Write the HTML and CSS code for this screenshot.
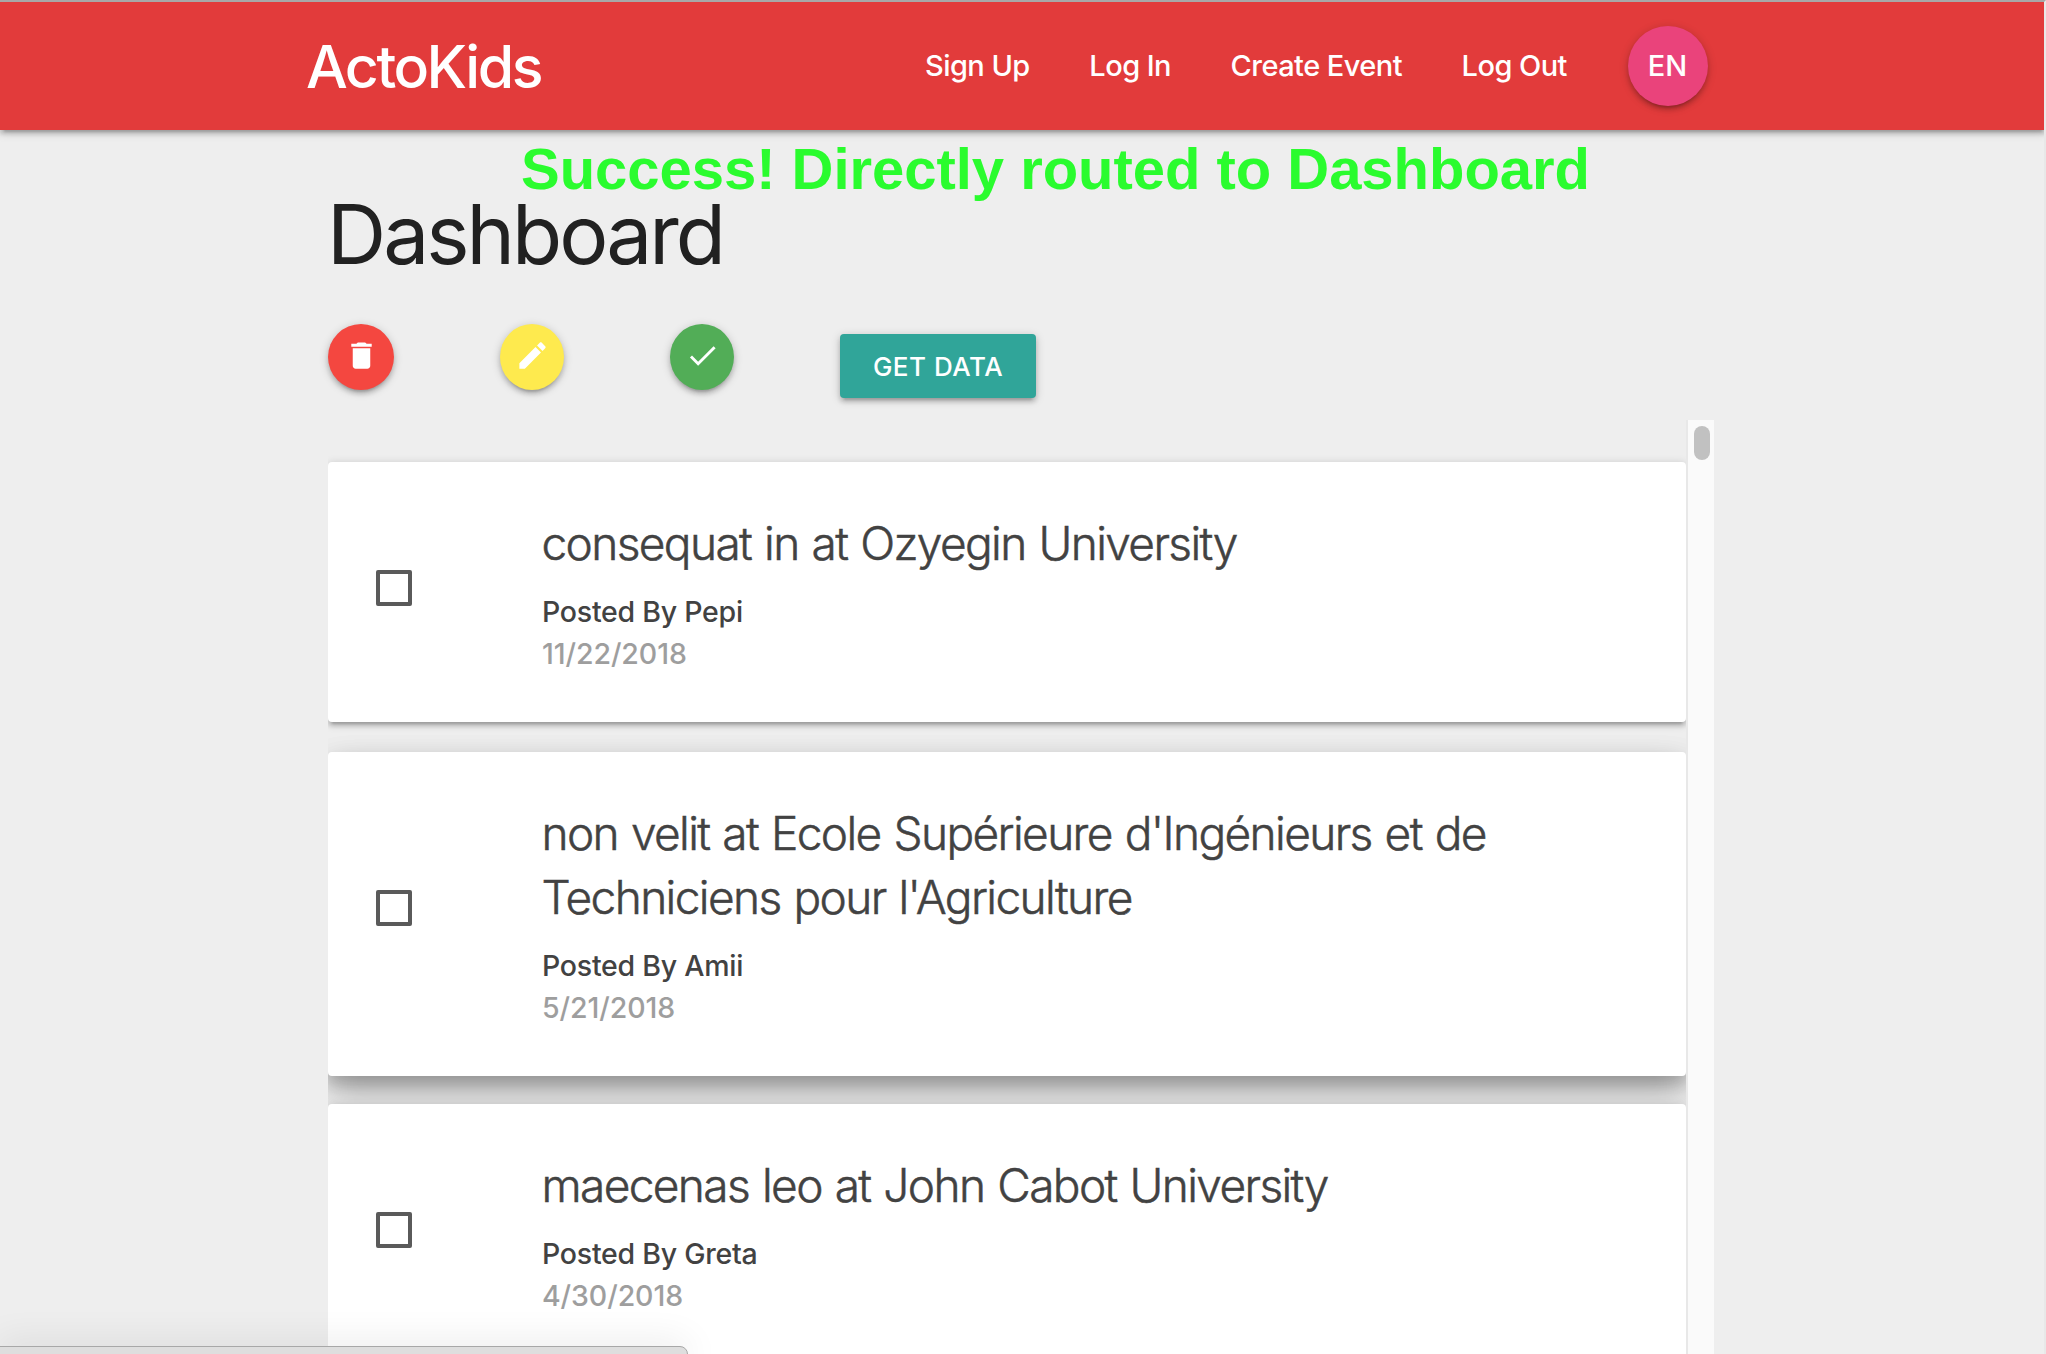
FILE: index.html
```
<!DOCTYPE html>
<html lang="en">
<head>
<meta charset="utf-8">
<title>ActoKids</title>
<link rel="stylesheet" href="styles.css">
</head>
<body>
<div class="page">
  <header class="navbar">
    <a class="brand">ActoKids</a>
    <nav class="links">
      <a class="link">Sign Up</a>
      <a class="link">Log In</a>
      <a class="link">Create Event</a>
      <a class="link">Log Out</a>
      <a class="lang">EN</a>
    </nav>
  </header>
  <p class="flash">Success! Directly routed to Dashboard</p>
  <main class="main">
    <h1 class="heading">Dashboard</h1>
    <div class="actions">
      <button class="round round-delete" aria-label="Delete"><svg class="icon" viewBox="0 0 24 24"><path d="M6 19c0 1.1.9 2 2 2h8c1.1 0 2-.9 2-2V7H6v12zM19 4h-3.500l-1-1h-5l-1 1H5v2h14V4z"/></svg></button>
      <button class="round" aria-label="Edit"><svg class="icon" viewBox="0 0 24 24"><path d="M3 17.250V21h3.750L17.810 9.940l-3.750-3.750L3 17.250zM20.710 7.040c.39-.39.39-1.020 0-1.410l-2.340-2.340c-.39-.39-1.020-.39-1.410 0l-1.830 1.830 3.750 3.750 1.830-1.830z"/></svg></button>
      <button class="round round-approve" aria-label="Approve"><svg class="icon" viewBox="0 0 24 24"><path d="M9 16.200L4.800 12l-1.400 1.400L9 19 21 7l-1.400-1.400L9 16.200z"/></svg></button>
      <button class="get-data">GET DATA</button>
    </div>
    <div class="scroller">
      <div class="list">
        <article class="card">
          <span class="check"></span>
          <div class="info"><h2 class="title">consequat in at Ozyegin University</h2><p class="author">Posted By Pepi</p><p class="date">11/22/2018</p></div>
        </article>
        <article class="card card-hover">
          <span class="check"></span>
          <div class="info"><h2 class="title">non velit at Ecole Supérieure d'Ingénieurs et de Techniciens pour l'Agriculture</h2><p class="author">Posted By Amii</p><p class="date">5/21/2018</p></div>
        </article>
        <article class="card">
          <span class="check"></span>
          <div class="info"><h2 class="title">maecenas leo at John Cabot University</h2><p class="author">Posted By Greta</p><p class="date">4/30/2018</p></div>
        </article>
      </div>
      <div class="track"><div class="thumb"></div></div>
    </div>
  </main>
  <div class="status"></div>
</div>
</body>
</html>
```
FILE: styles.css
```
* { box-sizing: border-box; margin: 0; }
body { background: #eee; font-family: Inter, "Liberation Sans", sans-serif; }
.page {
  position: relative;
  height: 1354px;
  overflow: hidden;
  border-top: 2px solid #a8a8a8;
  border-right: 2px solid #e8e8e8;
  display: flex;
  flex-direction: column;
}
.navbar {
  flex: none;
  height: 128px;
  margin-right: -2px;
  padding: 0 338px 0 306px;
  display: flex;
  align-items: center;
  justify-content: space-between;
  background: #e23b3b;
  color: #fff;
  box-shadow: 0 4px 4px rgba(0,0,0,.14), 0 6px 2px -4px rgba(0,0,0,.12), 0 2px 10px rgba(0,0,0,.2);
}
.brand { padding-top: 2px; font-size: 59px; font-weight: 500; line-height: 126px; letter-spacing: -2.5px; }
.links { display: flex; align-items: center; gap: 59.6px; font-size: 29px; font-weight: 500; line-height: 128px; letter-spacing: -.55px; }
.lang {
  width: 80px;
  height: 80px;
  margin-left: 1.5px;
  padding-right: 1px;
  line-height: 80px;
  border-radius: 50%;
  text-align: center;
  letter-spacing: 0;
  background: #ea437b;
  box-shadow: 0 4px 4px rgba(0,0,0,.14), 0 6px 2px -4px rgba(0,0,0,.12), 0 2px 10px rgba(0,0,0,.2);
}
.flash {
  position: absolute;
  left: 521px;
  top: 134px;
  font: bold 58px/66px "Liberation Sans", Arial, sans-serif;
  letter-spacing: -.03px;
  white-space: nowrap;
  color: #2afc2e;
}
.main { flex: 1; min-height: 0; padding: 59px 330px 0 328px; display: flex; flex-direction: column; }
.heading { margin-left: -1px; font-size: 82px; font-weight: 400; line-height: 92px; letter-spacing: -3px; color: #212121; }
.actions { margin-top: 43px; height: 96px; display: grid; grid-template-columns: 172px 170px 170px 196px; align-items: start; }
.round {
  width: 64px;
  height: 66px;
  padding: 0 0 4px;
  border: 0;
  border-radius: 50%;
  display: flex;
  align-items: center;
  justify-content: center;
  background: #feea4e;
  box-shadow: 0 4px 4px rgba(0,0,0,.14), 0 6px 2px -4px rgba(0,0,0,.12), 0 2px 10px rgba(0,0,0,.2);
}
.round-delete { width: 66px; background: #f44740; }
.round-approve { background: #52ad57; }
.icon { width: 35px; height: 35px; fill: #fff; }
.get-data {
  height: 64px;
  margin-top: 10px;
  padding: 2px 0 0;
  border: 0;
  border-radius: 4px;
  background: #30a599;
  color: #fff;
  font: 500 26px/62px Inter, sans-serif;
  letter-spacing: .5px;
  box-shadow: 0 4px 4px rgba(0,0,0,.14), 0 6px 2px -4px rgba(0,0,0,.12), 0 2px 10px rgba(0,0,0,.2);
}
.scroller { flex: 1; min-height: 0; display: flex; }
.list { width: 1358px; padding-top: 42px; overflow: hidden; }
.card {
  display: flex;
  align-items: center;
  padding: 49px 48px 47px;
  margin-bottom: 28px;
  border-radius: 4px;
  background: #fff;
  box-shadow: 0 4px 4px rgba(0,0,0,.14), 0 6px 2px -4px rgba(0,0,0,.12), 0 2px 10px rgba(0,0,0,.2);
}
.card:first-child { margin-bottom: 30px; }
.card-hover { box-shadow: 0 16px 34px rgba(0,0,0,.2), 0 12px 30px rgba(0,0,0,.17), 0 8px 12px rgba(0,0,0,.1); }
.check { flex: none; width: 36px; height: 36px; margin: -10px 126px 0 0; border: 4px solid #5a5a5a; border-radius: 2px; }
.card-hover .check { margin-top: -14px; }
.info { width: 1000px; margin-left: 4px; color: #424242; font-size: 28.5px; line-height: 42px; }
.title {
  margin: 0 0 16px -.5px;
  font-size: 46px;
  font-weight: 300;
  line-height: 64px;
  letter-spacing: -1.62px;
  word-spacing: 1.6px;
  -webkit-text-stroke: .5px #424242;
}
.author { font-weight: 500; letter-spacing: -.25px; }
.date { font-weight: 500; letter-spacing: -.08px; color: #9e9e9e; }
.track { width: 28px; border-left: 2px solid #e8e8e8; background: #fafafa; padding: 6px; }
.thumb { width: 16px; height: 34px; border-radius: 8px; background: #c1c1c1; }
.status {
  position: absolute;
  left: -2px;
  bottom: -4px;
  width: 690px;
  height: 12px;
  border: 1px solid #a8a8a8;
  border-radius: 0 8px 0 0;
  background: #dedede;
  box-shadow: 0 0 36px rgba(0,0,0,.16);
}
```
